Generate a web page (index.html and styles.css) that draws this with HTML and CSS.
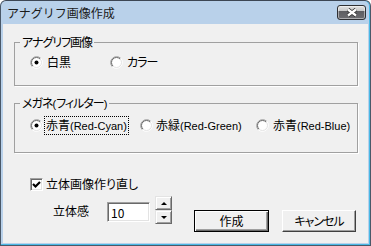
FILE: index.html
```html
<!DOCTYPE html>
<html lang="ja">
<head>
    <meta charset="UTF-8">
    <title>アナグリフ画像作成</title>
    <link rel="stylesheet" href="styles.css">
</head>
<body>
    <svg class="defs" width="0" height="0">
        <symbol id="radio" viewBox="0 0 13 13">
            <circle cx="6.5" cy="6.5" r="5.5" fill="#fff"/>
            <path d="M2.26 10.74 A6 6 0 0 1 10.74 2.26" fill="none" stroke="#a0a0a0"/>
            <path d="M10.74 2.26 A6 6 0 0 1 2.26 10.74" fill="none" stroke="#fff"/>
            <path d="M2.96 10.04 A5 5 0 0 1 10.04 2.96" fill="none" stroke="#696969"/>
            <path d="M10.04 2.96 A5 5 0 0 1 2.96 10.04" fill="none" stroke="#e3e3e3"/>
        </symbol>
    </svg>

    <div class="window">
        <div class="titlebar">
            <span class="title">アナグリフ画像作成</span>
            <span class="close">
                <svg width="12" height="9" viewBox="0 0 12 9">
                    <path d="M2 1.5 L10 7.5 M10 1.5 L2 7.5" stroke="#333" stroke-width="4"/>
                    <path d="M2 1.5 L10 7.5 M10 1.5 L2 7.5" stroke="#fff" stroke-width="2.2"/>
                </svg>
            </span>
        </div>

        <div class="content">
            <!-- 画像の種類 -->
            <fieldset class="group group-type">
                <legend class="kana">アナグリフ画像</legend>
                <div class="options">
                    <label class="opt opt-bw">
                        <svg class="radio" width="13" height="13"><use href="#radio"/><circle cx="6.5" cy="6.5" r="2" fill="#000"/></svg>
                        <span>白黒</span>
                    </label>
                    <label class="opt">
                        <svg class="radio" width="13" height="13"><use href="#radio"/></svg>
                        <span class="kana">カラー</span>
                    </label>
                </div>
            </fieldset>

            <!-- メガネの種類 -->
            <fieldset class="group group-glasses">
                <legend class="kana">メガネ<span class="en">(</span>フィルター<span class="en">)</span></legend>
                <div class="options">
                    <label class="opt opt-cyan">
                        <svg class="radio" width="13" height="13"><use href="#radio"/><circle cx="6.5" cy="6.5" r="2" fill="#000"/></svg>
                        <span class="focus">赤青<span class="en">(Red-Cyan)</span></span>
                    </label>
                    <label class="opt opt-green">
                        <svg class="radio" width="13" height="13"><use href="#radio"/></svg>
                        <span>赤緑<span class="en">(Red-Green)</span></span>
                    </label>
                    <label class="opt">
                        <svg class="radio" width="13" height="13"><use href="#radio"/></svg>
                        <span>赤青<span class="en">(Red-Blue)</span></span>
                    </label>
                </div>
            </fieldset>

            <label class="check-row">
                <span class="checkbox">
                    <svg width="9" height="9" viewBox="0 0 9 9">
                        <path d="M1 4 L3.5 6.5 L8 2" fill="none" stroke="#000" stroke-width="2.2"/>
                    </svg>
                </span>
                <span>立体画像作り直し</span>
            </label>

            <div class="bottom-row">
                <span class="depth-label">立体感</span>
                <input class="field" type="text" value="10">
                <div class="spin">
                    <span class="spin-btn up"></span>
                    <span class="spin-btn down"></span>
                </div>
                <button class="btn btn-default">作成</button>
                <button class="btn btn-cancel kana">キャンセル</button>
            </div>
        </div>
    </div>
</body>
</html>
```

FILE: styles.css
```css
body {
    margin: 0;
    font-family: "Noto Sans CJK JP", sans-serif;
    font-size: 12px;
    color: #000;
}

.defs {
    position: absolute;
}

.window {
    width: 371px;
    height: 246px;
    box-sizing: border-box;
    border: 1px solid #4a5868;
    border-top-color: #3c4654;
    border-radius: 6px 6px 0 0;
    background: #b9d1ea;
    padding: 0 2px 2px 2px;
    display: flex;
    flex-direction: column;
    box-shadow: inset 0 -1px 0 #49b9e6, inset -1px 0 0 #49b9e6;
}

/* Title bar */
.titlebar {
    height: 23px;
    display: flex;
    align-items: center;
    justify-content: space-between;
    padding: 0 2px 0 4px;
}

.title {
    font-size: 12px;
    line-height: 14px;
    color: #1b1b1b;
}

.close {
    width: 29px;
    height: 15px;
    box-sizing: border-box;
    border: 1px solid #2f3033;
    border-radius: 3px;
    background: linear-gradient(#e2e2e2 0%, #c6c6c6 40%, #5e5e62 42%, #6c6c70 100%);
    box-shadow: inset 0 0 0 1px rgba(255, 255, 255, 0.45);
    display: flex;
    align-items: center;
    justify-content: center;
}

.close svg {
    display: block;
}

/* Client area: proportional kana like the dialog font */
.content {
    flex: 1;
    background: #f0f0f0;
    padding-left: 11px;
    font-feature-settings: "palt";
}

.kana {
    letter-spacing: -1px;
}

.group {
    width: 344px;
    box-sizing: border-box;
    margin: 0;
    padding: 0;
    border: 1px solid #a0a0a0;
    box-shadow: 1px 1px 0 #fff;
    min-width: 0;
}

.group legend {
    margin-left: 5px;
    padding: 0 2px;
    line-height: 14px;
}

.group-type {
    margin-top: 11px;
    padding-bottom: 16px;
}

.group-type .options {
    margin-top: 6px;
    height: 14px;
}

.group-glasses {
    margin-top: 10px;
    padding-bottom: 19px;
}

.group-glasses .options {
    margin-top: 7px;
    height: 15px;
}

.options {
    display: flex;
    align-items: center;
    margin-left: 15px;
}

.opt {
    display: flex;
    align-items: center;
    gap: 4px;
    line-height: 14px;
}

.radio {
    display: block;
    flex: none;
}

.en {
    font-family: "Liberation Sans", sans-serif;
    font-size: 11px;
    letter-spacing: 0;
}

.opt-bw {
    width: 80px;
}

.opt-cyan {
    width: 110px;
    gap: 2px;
}

.opt-green {
    width: 116px;
    gap: 3px;
}

.focus {
    outline: 1px dotted #000;
    padding: 0 1px;
    line-height: 15px;
}

/* Checkbox row */
.check-row {
    display: flex;
    align-items: center;
    gap: 3px;
    margin: 24px 0 0 16px;
    height: 14px;
    line-height: 14px;
}

.checkbox {
    width: 13px;
    height: 13px;
    box-sizing: border-box;
    background: #fff;
    border: 1px solid;
    border-color: #a0a0a0 #fff #fff #a0a0a0;
    box-shadow: inset 1px 1px 0 #696969, inset -1px -1px 0 #e3e3e3;
    display: flex;
    align-items: center;
    justify-content: center;
}

.checkbox svg {
    display: block;
}

/* Depth and buttons */
.bottom-row {
    display: flex;
    align-items: flex-start;
    margin-top: 5px;
}

.depth-label {
    margin: 8px 0 0 39px;
    line-height: 14px;
    width: 36px;
}

.field {
    margin: 6px 0 0 18px;
    width: 43px;
    height: 20px;
    box-sizing: border-box;
    padding: 0 0 0 3px;
    font-family: "Noto Sans CJK JP", sans-serif;
    font-size: 12px;
    color: #000;
    background: #fff;
    border: 1px solid;
    border-color: #a0a0a0 #fff #fff #a0a0a0;
    box-shadow: inset 1px 1px 0 #696969, inset -1px -1px 0 #e3e3e3;
    outline: none;
}

.spin {
    margin-left: 5px;
    display: flex;
    flex-direction: column;
}

.spin-btn {
    width: 17px;
    height: 14px;
    box-sizing: border-box;
    background: #f0f0f0;
    border: 1px solid;
    border-color: #e3e3e3 #696969 #696969 #e3e3e3;
    box-shadow: inset 1px 1px 0 #fff, inset -1px -1px 0 #a0a0a0;
    display: flex;
    align-items: center;
    justify-content: center;
}

.spin-btn::before {
    content: "";
    border-left: 3px solid transparent;
    border-right: 3px solid transparent;
}

.up::before {
    border-bottom: 3px solid #000;
}

.down::before {
    border-top: 3px solid #000;
}

.btn {
    margin-top: 14px;
    height: 22px;
    box-sizing: border-box;
    padding: 0;
    font-family: "Noto Sans CJK JP", sans-serif;
    font-size: 12px;
    font-feature-settings: "palt";
    line-height: 14px;
    color: #000;
    background: #f0f0f0;
    border: 1px solid;
}

.btn-default {
    margin-left: 22px;
    width: 75px;
    border-color: #000;
    box-shadow: inset 1px 1px 0 #fff, inset -1px -1px 0 #696969, inset -2px -2px 0 #a0a0a0;
}

.btn-cancel {
    margin-left: 13px;
    width: 74px;
    border-color: #fff #404040 #404040 #fff;
    box-shadow: inset -1px -1px 0 #a0a0a0;
}
```
